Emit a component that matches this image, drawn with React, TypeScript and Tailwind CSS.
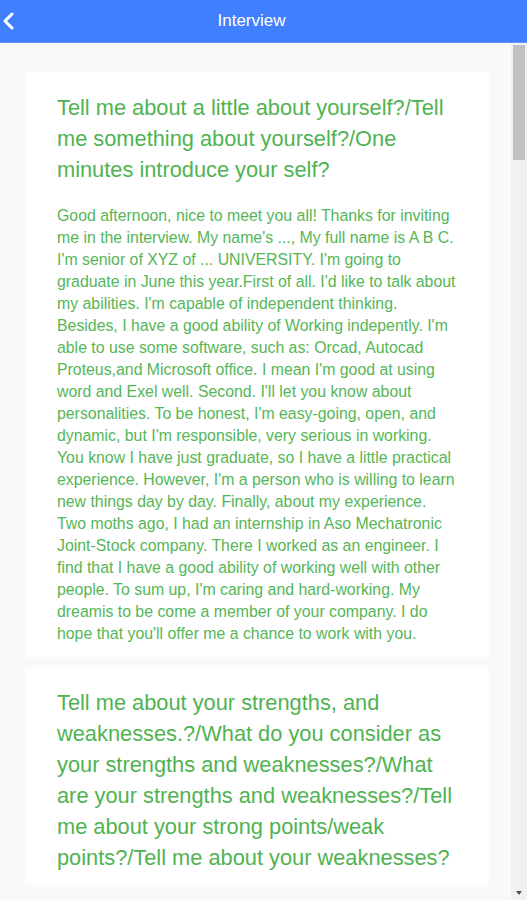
import React from "react";

const body1 = [
  "Good afternoon, nice to meet you all! Thanks for inviting",
  "me in the interview. My name's ..., My full name is A B C.",
  "I'm senior of XYZ of ... UNIVERSITY. I'm going to",
  "graduate in June this year.First of all. I'd like to talk about",
  "my abilities. I'm capable of independent thinking.",
  "Besides, I have a good ability of Working indepently. I'm",
  "able to use some software, such as: Orcad, Autocad",
  "Proteus,and Microsoft office. I mean I'm good at using",
  "word and Exel well. Second. I'll let you know about",
  "personalities. To be honest, I'm easy-going, open, and",
  "dynamic, but I'm responsible, very serious in working.",
  "You know I have just graduate, so I have a little practical",
  "experience. However, I'm a person who is willing to learn",
  "new things day by day. Finally, about my experience.",
  "Two moths ago, I had an internship in Aso Mechatronic",
  "Joint-Stock company. There I worked as an engineer. I",
  "find that I have a good ability of working well with other",
  "people. To sum up, I'm caring and hard-working. My",
  "dreamis to be come a member of your company. I do",
  "hope that you'll offer me a chance to work with you.",
];

const head1 = [
  "Tell me about a little about yourself?/Tell",
  "me something about yourself?/One",
  "minutes introduce your self?",
];

const head2 = [
  "Tell me about your strengths, and",
  "weaknesses.?/What do you consider as",
  "your strengths and weaknesses?/What",
  "are your strengths and weaknesses?/Tell",
  "me about your strong points/weak",
  "points?/Tell me about your weaknesses?",
];

function Card({ head, body }: { head: string[]; body?: string[] }) {
  return (
    <div className="ml-[25px] w-[464px] bg-white pt-[20px] px-[32px] pb-[12px] mb-[10px] shrink-0">
      <div className="text-[21.8px] leading-[31px] text-[#50b352]">
        {head.map((l, i) => (
          <div key={i} className="whitespace-nowrap">{l}</div>
        ))}
      </div>
      {body && (
        <div className="mt-[20px] text-[15.85px] leading-[22px] text-[#55b657]">
          {body.map((l, i) => (
            <div key={i} className="whitespace-nowrap">{l}</div>
          ))}
        </div>
      )}
    </div>
  );
}

export default function App() {
  return (
    <div
      className="w-[527px] h-[900px] overflow-hidden flex flex-col bg-[#f9f9f9]"
      style={{ fontFamily: '"Liberation Sans", Arial, sans-serif' }}
    >
      <div className="h-[43px] shrink-0 bg-[#4080ff] border-b border-[#5f95ff] flex items-center">
        <svg width="14" height="18" viewBox="0 0 14 18" className="ml-[2px]">
          <path d="M10 2 L3 9 L10 16" fill="none" stroke="white" strokeWidth="3" strokeLinecap="round" strokeLinejoin="round" />
        </svg>
        <div className="flex-1 text-center text-white text-[17px] pr-[40px]">Interview</div>
      </div>
      <div className="flex flex-1 min-h-0">
        <div className="flex-1 overflow-hidden pt-[29px] flex flex-col">
          <Card head={head1} body={body1} />
          <Card head={head2} />
        </div>
        <div className="w-[16px] bg-[#f1f1f1] flex flex-col items-center">
          <div className="mt-[2px] w-[12px] h-[115px] bg-[#c1c1c1]" />
          <div className="flex-1" />
          <svg width="8" height="6" viewBox="0 0 8 6" className="mb-[4px]">
            <path d="M1 1 L7 1 L4 5 Z" fill="#505050" />
          </svg>
        </div>
      </div>
    </div>
  );
}
